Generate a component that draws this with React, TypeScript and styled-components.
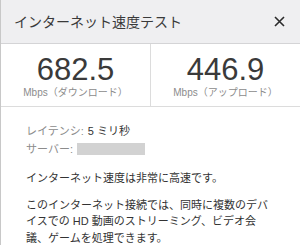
import styled, { createGlobalStyle } from 'styled-components'

const GlobalStyle = createGlobalStyle`
  html, body {
    margin: 0;
    padding: 0;
    background: #ffffff;
  }
  * {
    box-sizing: border-box;
  }
  body {
    font-family: "Liberation Sans", "Noto Sans CJK JP", sans-serif;
  }
`

type Result = {
  value: string
  label: string
}

const results: Result[] = [
  { value: '682.5', label: '（ダウンロード）' },
  { value: '446.9', label: '（アップロード）' },
]

function App() {
  return (
    <>
      <GlobalStyle />
      <Panel>
        <Header>
          <Title>インターネット速度テスト</Title>
          <CloseButton aria-label="閉じる">
            <svg width="11" height="11" viewBox="0 0 11 11">
              <path d="M1 1 L10 10 M10 1 L1 10" stroke="#2b2b2b" strokeWidth="1.6" />
            </svg>
          </CloseButton>
        </Header>

        <Stats>
          {results.map((r) => (
            <Stat key={r.value}>
              <Value>{r.value}</Value>
              <Unit>Mbps{r.label}</Unit>
            </Stat>
          ))}
        </Stats>

        <Body>
          <Details>
            <Row>
              <Key>レイテンシ:</Key> <Val>5 ミリ秒</Val>
            </Row>
            <Row>
              <Key>サーバー:</Key> <Hidden />
            </Row>
          </Details>
          <Text>インターネット速度は非常に高速です。</Text>
          <Text>
            このインターネット接続では、同時に複数のデバイスでの HD 動画のストリーミング、ビデオ会議、ゲームを処理できます。
          </Text>
        </Body>
      </Panel>
    </>
  )
}

const Panel = styled.div`
  width: 300px;
  height: 245px;
  border-left: 1px solid #c8c8c8;
  overflow: hidden;
`

const Header = styled.div`
  height: 44px;
  background: #efeff1;
  border-bottom: 1px solid #d4d4d6;
  display: flex;
  align-items: center;
  justify-content: space-between;
  padding: 0 14px 1px 13px;
`

const Title = styled.h1`
  margin: 0;
  font-size: 14px;
  font-weight: 400;
  color: #3a3a3a;
`

const CloseButton = styled.button`
  border: none;
  background: none;
  padding: 0;
  width: 11px;
  height: 11px;
  display: flex;
  margin-right: 1px;
  cursor: pointer;
`

const Stats = styled.div`
  display: grid;
  grid-template-columns: 149px 1fr;
  height: 63px;
  border-bottom: 1px solid #dcdcdc;
`

const Stat = styled.div`
  display: flex;
  flex-direction: column;
  align-items: center;
  padding-top: 9px;

  & + & {
    border-left: 1px solid #dcdcdc;
  }
`

const Value = styled.div`
  font-size: 31px;
  line-height: 33px;
  color: #3a3a3a;
`

const Unit = styled.div`
  font-size: 10px;
  line-height: 12px;
  color: #8c8c8c;
  margin-top: 1px;
`

const Body = styled.div`
  width: 299px;
  padding: 17px 26px 0 25px;
`

const Details = styled.div`
  display: flex;
  flex-direction: column;
  gap: 4px;
  margin-bottom: 14px;
`

const Row = styled.div`
  display: flex;
  align-items: center;
  gap: 4px;
  font-size: 11px;
  line-height: 14px;
`

const Key = styled.span`
  color: #8c8c8c;
`

const Val = styled.span`
  color: #333333;
`

const Hidden = styled.span`
  display: inline-block;
  width: 68px;
  height: 12px;
  background: #d2d2d2;
`

const Text = styled.p`
  margin: 0 0 10px;
  font-size: 11px;
  line-height: 16.5px;
  color: #333333;
`

export default App
